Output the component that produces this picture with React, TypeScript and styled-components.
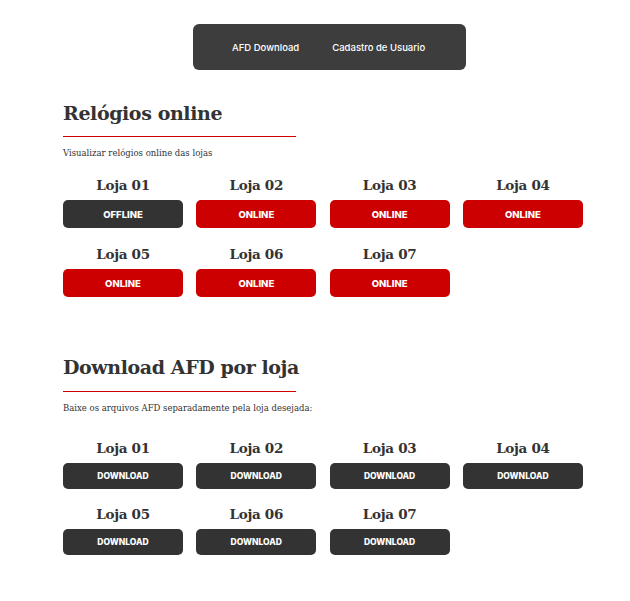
import styled, { createGlobalStyle } from "styled-components";

const GlobalStyle = createGlobalStyle`
  body {
    margin: 0;
    background: #ffffff;
    font-family: "Roboto", "Noto Sans", sans-serif;
  }
`;

const lojas = ["Loja 01", "Loja 02", "Loja 03", "Loja 04", "Loja 05", "Loja 06", "Loja 07"];
const status = [false, true, true, true, true, true, true];

function App() {
  return (
    <>
      <GlobalStyle />
      <Page>
        <Nav>
          <NavLink>AFD Download</NavLink>
          <NavLink>Cadastro de Usuario</NavLink>
        </Nav>

        <Section>
          <Title>Relógios online</Title>
          <Divider />
          <Lead>Visualizar relógios online das lojas</Lead>
          <Grid $rowGap={15} $top={14}>
            {lojas.map((loja, i) => (
              <Card key={loja}>
                <StoreName>{loja}</StoreName>
                <StatusBtn $online={status[i]}>{status[i] ? "ONLINE" : "OFFLINE"}</StatusBtn>
              </Card>
            ))}
          </Grid>
        </Section>

        <Section $top={56}>
          <Title>Download AFD por loja</Title>
          <Divider $top={10} />
          <Lead>Baixe os arquivos AFD separadamente pela loja desejada:</Lead>
          <Grid $rowGap={14} $top={22}>
            {lojas.map((loja) => (
              <Card key={loja}>
                <StoreName>{loja}</StoreName>
                <DownloadBtn>DOWNLOAD</DownloadBtn>
              </Card>
            ))}
          </Grid>
        </Section>
      </Page>
    </>
  );
}

export default App;

const Page = styled.div`
  display: flex;
  flex-direction: column;
  width: 520px;
  padding: 24px 0 40px 63px;
`;

const Nav = styled.nav`
  display: flex;
  align-items: center;
  gap: 33px;
  width: 273px;
  height: 46px;
  box-sizing: border-box;
  margin-left: 130px;
  padding-left: 39px;
  background-color: #3d3d3d;
  border-radius: 6px;
`;

const NavLink = styled.a`
  color: #ffffff;
  font-family: "Inter", "Noto Sans", sans-serif;
  font-size: 9.5px;
  font-weight: 500;
  cursor: pointer;
`;

const Section = styled.section<{ $top?: number }>`
  display: flex;
  flex-direction: column;
  margin-top: ${(p) => p.$top ?? 29}px;
`;

const Title = styled.h2`
  margin: 0;
  color: #333333;
  font-family: "DejaVu Serif", "Liberation Serif", serif;
  font-size: 19px;
  font-weight: 700;
  line-height: 28px;
  letter-spacing: -0.4px;
`;

const Divider = styled.hr<{ $top?: number }>`
  width: 233px;
  margin: ${(p) => p.$top ?? 9}px 0 0;
  border: none;
  border-top: 1px solid #cc0000;
`;

const Lead = styled.p`
  margin: 9px 0 0;
  color: #333333;
  font-family: "DejaVu Serif", "Liberation Serif", serif;
  font-size: 8.5px;
  line-height: 14px;
`;

const Grid = styled.div<{ $rowGap: number; $top?: number }>`
  display: grid;
  grid-template-columns: repeat(4, 120px);
  column-gap: 13.3px;
  row-gap: ${(p) => p.$rowGap}px;
  margin-top: ${(p) => p.$top ?? 16}px;
`;

const Card = styled.div`
  display: flex;
  flex-direction: column;
  align-items: stretch;
  gap: 4px;
`;

const StoreName = styled.h3`
  margin: 0;
  text-align: center;
  color: #333333;
  font-family: "DejaVu Serif", "Liberation Serif", serif;
  font-size: 13.5px;
  font-weight: 700;
  line-height: 22px;
  letter-spacing: -0.3px;
`;

const StatusBtn = styled.button<{ $online: boolean }>`
  height: 28px;
  border: none;
  border-radius: 5px;
  background-color: ${(p) => (p.$online ? "#cc0000" : "#333333")};
  color: #ffffff;
  font-family: "Inter", "Noto Sans", sans-serif;
  font-size: 9.5px;
  font-weight: 800;
  cursor: pointer;
`;

const DownloadBtn = styled.button`
  height: 26px;
  border: none;
  border-radius: 5px;
  background-color: #333333;
  color: #ffffff;
  font-family: "Inter", "Noto Sans", sans-serif;
  font-size: 8.5px;
  font-weight: 800;
  cursor: pointer;
`;
